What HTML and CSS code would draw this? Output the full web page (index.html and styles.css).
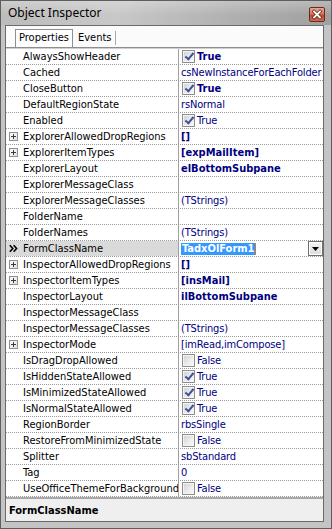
FILE: index.html
```html
<!DOCTYPE html>
<html>
<head>
<meta charset="utf-8">
<link rel="stylesheet" href="styles.css">
</head>
<body>
<div class="window">
  <div class="titlebar">
    <span class="title">Object Inspector</span>
    <span class="close"><svg width="16" height="15" viewBox="0 0 16 15"><path d="M5 4.5 L11 10.5 M11 4.5 L5 10.5" stroke="#5a2418" stroke-width="3.2" stroke-linecap="square"/><path d="M5 4.5 L11 10.5 M11 4.5 L5 10.5" stroke="#fff" stroke-width="1.8" stroke-linecap="square"/></svg></span>
  </div>
  <div class="client">
    <div class="tabstrip">
      <div class="tab active">Properties</div>
      <div class="tab">Events</div>
    </div>
    <div class="grid">
      <div class="row"><div class="name"><span class="mk"></span>AlwaysShowHeader</div><div class="value b"><span class="cb on"></span>True</div></div>
      <div class="row"><div class="name"><span class="mk"></span>Cached</div><div class="value">csNewInstanceForEachFolder</div></div>
      <div class="row"><div class="name"><span class="mk"></span>CloseButton</div><div class="value b"><span class="cb on"></span>True</div></div>
      <div class="row"><div class="name"><span class="mk"></span>DefaultRegionState</div><div class="value">rsNormal</div></div>
      <div class="row"><div class="name"><span class="mk"></span>Enabled</div><div class="value"><span class="cb on"></span>True</div></div>
      <div class="row"><div class="name"><span class="mk plus"></span>ExplorerAllowedDropRegions</div><div class="value b">[]</div></div>
      <div class="row"><div class="name"><span class="mk plus"></span>ExplorerItemTypes</div><div class="value b">[expMailItem]</div></div>
      <div class="row"><div class="name"><span class="mk"></span>ExplorerLayout</div><div class="value b">elBottomSubpane</div></div>
      <div class="row"><div class="name"><span class="mk"></span>ExplorerMessageClass</div><div class="value"></div></div>
      <div class="row"><div class="name"><span class="mk"></span>ExplorerMessageClasses</div><div class="value">(TStrings)</div></div>
      <div class="row"><div class="name"><span class="mk"></span>FolderName</div><div class="value"></div></div>
      <div class="row"><div class="name"><span class="mk"></span>FolderNames</div><div class="value">(TStrings)</div></div>
      <div class="row selected"><div class="name"><span class="mk cur"><svg width="9" height="9" viewBox="0 0 9 9"><path d="M0.8 1.2 L3.8 4.5 L0.8 7.8 M4.6 1.2 L7.6 4.5 L4.6 7.8" stroke="#000" stroke-width="1.6" fill="none"/></svg></span>FormClassName</div><div class="value b"><span class="sel">TadxOlForm1</span><span class="caret"></span><span class="drop"><svg width="7" height="4" viewBox="0 0 7 4"><path d="M0 0 H7 L3.5 4 Z" fill="#000"/></svg></span></div></div>
      <div class="row"><div class="name"><span class="mk plus"></span>InspectorAllowedDropRegions</div><div class="value b">[]</div></div>
      <div class="row"><div class="name"><span class="mk plus"></span>InspectorItemTypes</div><div class="value b">[insMail]</div></div>
      <div class="row"><div class="name"><span class="mk"></span>InspectorLayout</div><div class="value b">ilBottomSubpane</div></div>
      <div class="row"><div class="name"><span class="mk"></span>InspectorMessageClass</div><div class="value"></div></div>
      <div class="row"><div class="name"><span class="mk"></span>InspectorMessageClasses</div><div class="value">(TStrings)</div></div>
      <div class="row"><div class="name"><span class="mk plus"></span>InspectorMode</div><div class="value">[imRead,imCompose]</div></div>
      <div class="row"><div class="name"><span class="mk"></span>IsDragDropAllowed</div><div class="value"><span class="cb"></span>False</div></div>
      <div class="row"><div class="name"><span class="mk"></span>IsHiddenStateAllowed</div><div class="value"><span class="cb on"></span>True</div></div>
      <div class="row"><div class="name"><span class="mk"></span>IsMinimizedStateAllowed</div><div class="value"><span class="cb on"></span>True</div></div>
      <div class="row"><div class="name"><span class="mk"></span>IsNormalStateAllowed</div><div class="value"><span class="cb on"></span>True</div></div>
      <div class="row"><div class="name"><span class="mk"></span>RegionBorder</div><div class="value">rbsSingle</div></div>
      <div class="row"><div class="name"><span class="mk"></span>RestoreFromMinimizedState</div><div class="value"><span class="cb"></span>False</div></div>
      <div class="row"><div class="name"><span class="mk"></span>Splitter</div><div class="value">sbStandard</div></div>
      <div class="row"><div class="name"><span class="mk"></span>Tag</div><div class="value">0</div></div>
      <div class="row"><div class="name"><span class="mk"></span>UseOfficeThemeForBackground</div><div class="value"><span class="cb"></span>False</div></div>
    </div>
    <div class="status">FormClassName</div>
  </div>
</div>
</body>
</html>
```
FILE: styles.css
```css
* { box-sizing: border-box; }
html, body { margin: 0; padding: 0; background: #fff; }
.window {
  width: 332px;
  height: 529px;
  border: 1px solid #5e5e5e;
  background: #c4c4c4;
  display: flex;
  flex-direction: column;
  font-family: "DejaVu Sans Condensed", "DejaVu Sans", sans-serif;
  font-size: 11px;
}
.titlebar {
  height: 24px;
  flex: none;
  display: flex;
  align-items: center;
  padding: 0 6px 0 7px;
  background:
    linear-gradient(to bottom, rgba(255,255,255,0.25), rgba(255,255,255,0) 60%),
    linear-gradient(to right, #bcbcbc 0%, #c8c8c8 35%, #b0b0b0 70%, #a0a0a0 100%);
}
.title {
  font-family: "Noto Sans", "Open Sans", sans-serif;
  font-size: 12px;
  color: #000;
  flex: 1;
  margin-top: -1px;
}
.close {
  width: 16px;
  height: 15px;
  border: 1px solid #6b2b20;
  border-radius: 2px;
  background: linear-gradient(to bottom, #e9a593 0%, #d87760 45%, #c4482f 55%, #d06a4f 100%);
  display: flex;
  align-items: center;
  justify-content: center;
  margin-top: 3px;
  overflow: hidden;
}
.close svg { display: block; margin: -1px; }
.client {
  flex: 1;
  margin: 0 7px 6px 4px;
  border: 1px solid #6b6b6b;
  background: #fff;
  display: flex;
  flex-direction: column;
  min-height: 0;
}
.tabstrip {
  height: 22px;
  flex: none;
  display: flex;
  align-items: flex-end;
  padding-left: 9px;
  border-bottom: 1px solid #8d8d8d;
  background: #fbfbfb;
}
.tab {
  height: 17px;
  line-height: 16px;
  padding: 0 3px;
  color: #000;
}
.tab.active {
  border: 1px solid #8c8f96;
  border-bottom: none;
  background: #fff;
  height: 18px;
}
.tab:not(.active) {
  margin-left: 2px;
  padding-right: 4px;
  border-right: 1px solid #a8a8a8;
  height: 14px;
  line-height: 13px;
  margin-bottom: 2px;
}
.grid {
  flex: none;
  border-top: 1px solid #cfcfcf;
}
.row {
  height: 16px;
  display: grid;
  grid-template-columns: 172px 1fr;
  border-bottom: 1px dotted #9a9a9a;
  line-height: 15px;
}
.name {
  display: flex;
  align-items: center;
  padding-left: 3px;
  white-space: nowrap;
  overflow: hidden;
  color: #000;
}
.mk {
  flex: none;
  width: 9px;
  height: 9px;
  margin-right: 5px;
  display: block;
}
.mk.plus {
  border: 1px solid #8e8e8e;
  background:
    linear-gradient(#3a3a3a, #3a3a3a) center / 5px 1px no-repeat,
    linear-gradient(#3a3a3a, #3a3a3a) center / 1px 5px no-repeat,
    linear-gradient(135deg, #ffffff, #e2e2e2);
}
.mk.cur svg { display: block; }
.value {
  display: flex;
  align-items: center;
  border-left: 1px solid #a0a0a0;
  padding-left: 2px;
  white-space: nowrap;
  overflow: hidden;
  color: #000080;
  letter-spacing: -0.15px;
}
.value.b { font-weight: bold; letter-spacing: 0; }
.cb {
  flex: none;
  width: 13px;
  height: 13px;
  margin: 0 2px 0 1px;
  border: 1px solid #8f8f8f;
  background: linear-gradient(135deg, #cfcfcf 0%, #eeeeee 60%, #fafafa 100%);
  box-shadow: inset 0 0 0 1px #f4f4f4;
  position: relative;
}
.cb.on::after {
  content: "";
  position: absolute;
  top: 0px;
  left: 3.5px;
  width: 3px;
  height: 7px;
  border-right: 2px solid #3b5497;
  border-bottom: 2px solid #3b5497;
  transform: rotate(40deg);
  transform-origin: center;
}
.selected .name { background: #dadada; }
.sel {
  background: #3399ff;
  color: #fff;
  padding: 0 1px;
  line-height: 12px;
  height: 12px;
}
.caret {
  width: 1px;
  height: 12px;
  background: #d07a2a;
}
.drop {
  margin-left: auto;
  width: 15px;
  height: 15px;
  border: 1px solid #6f6f6f;
  background: linear-gradient(#f4f4f4, #dcdcdc);
  box-shadow: inset 0 0 0 1px #fff;
  display: flex;
  align-items: center;
  justify-content: center;
}
.drop svg { display: block; }
.status {
  flex: 1;
  border-top: 2px solid #a9a9a9;
  background: #efefef;
  padding-left: 3px;
  display: flex;
  align-items: center;
  font-weight: bold;
  color: #000;
  font-size: 11px;
}
```
